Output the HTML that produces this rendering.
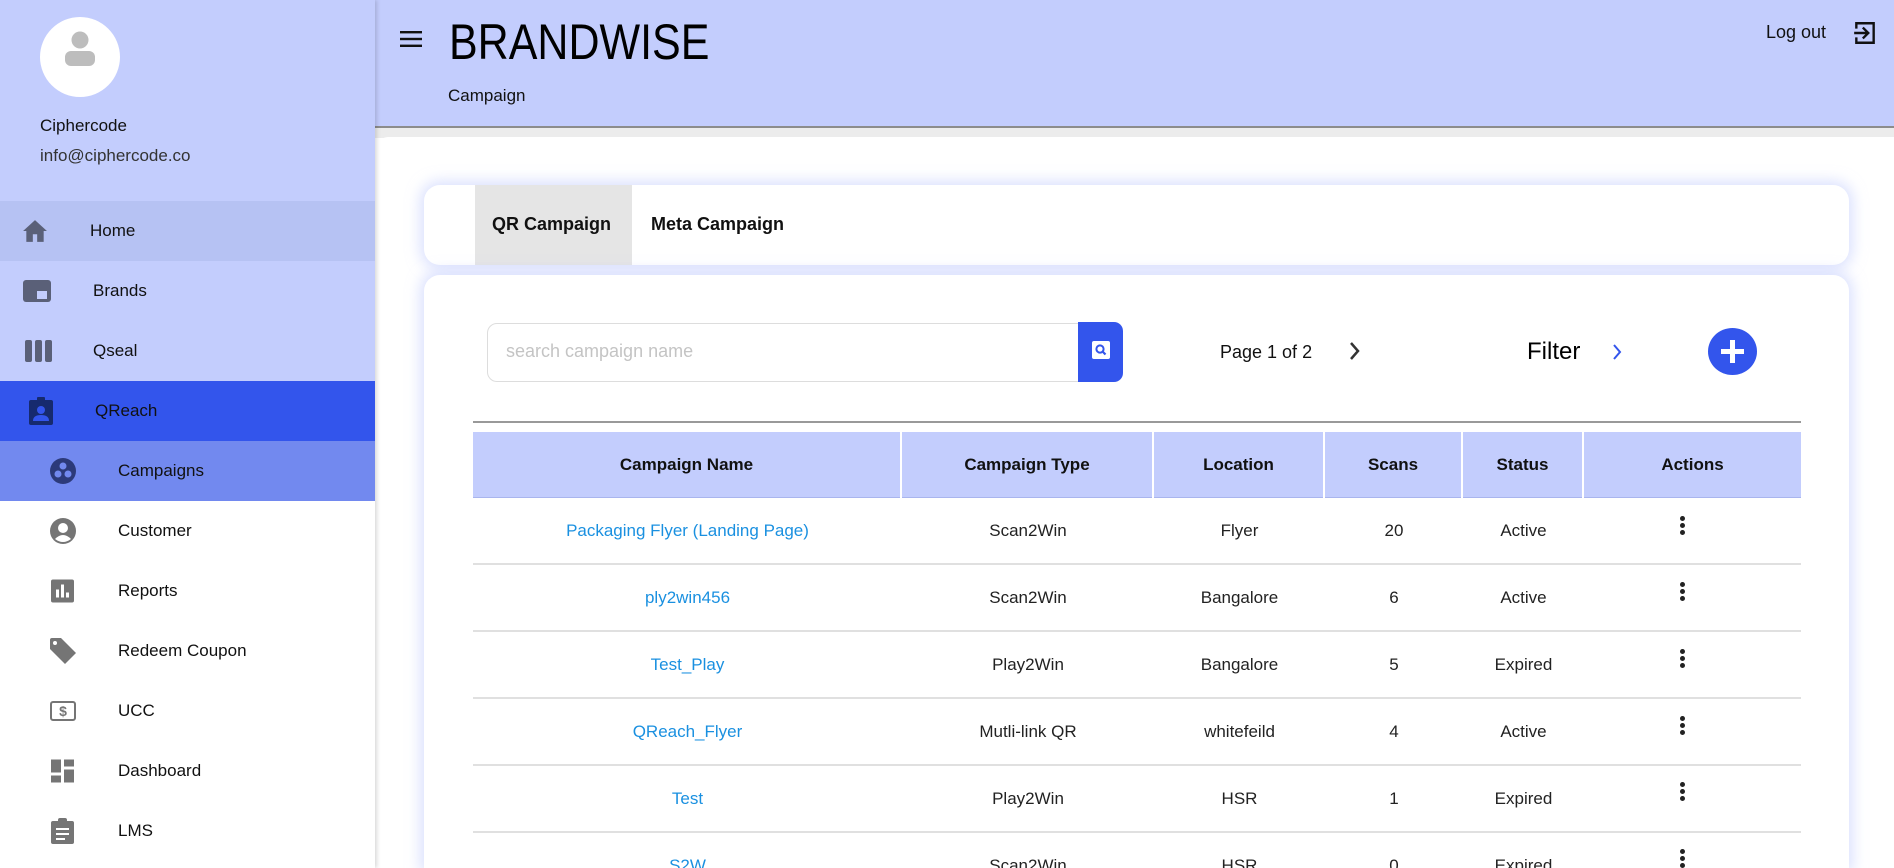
<!DOCTYPE html>
<html style="width:1894px;height:868px;overflow:hidden"><head><meta charset="utf-8"><style>
*{box-sizing:border-box;margin:0;padding:0}
body{width:1894px;height:868px;overflow:hidden;background:#fff;font-family:"Liberation Sans",sans-serif;position:relative;color:#111}
.abs{position:absolute}
#side{left:0;top:0;width:375px;height:868px;background:#fff;box-shadow:2px 0 4px rgba(0,0,0,.15);z-index:2}
#sidetop{left:0;top:0;width:375px;height:501px;background:#c3cdfd}
.nav{position:absolute;left:0;width:375px;height:60px;font-size:17px;color:#111}
.nav span{position:absolute;top:50%;transform:translateY(-50%)}
.nav svg{position:absolute;top:50%;transform:translateY(-50%)}
#hdr{left:375px;top:0;width:1519px;height:128px;background:#c3cdfd;border-bottom:2px solid #8c8c8c}
#strip{left:375px;top:128px;width:1519px;height:10px;background:#ececec}
#main{left:378px;top:137px;width:1516px;height:731px;background:#fff;border-top-left-radius:10px}
.card{background:#fff;border-radius:16px;box-shadow:0 0 14px 4px rgba(195,205,253,.6)}
.th{position:absolute;top:0;height:66px;line-height:66px;text-align:center;font-weight:bold;font-size:17px;border-right:2px solid #fff}
.row{position:absolute;left:473px;width:1328px;height:67px;border-bottom:2px solid #e0e0e0;overflow:hidden}
.c{position:absolute;top:0;height:65px;line-height:65px;text-align:center;font-size:17px;color:#222}
.lnk{color:#1a90e0}
.dots{position:absolute;left:1680px;width:6px}
.dots i{display:block;width:5px;height:5px;border-radius:50%;background:#222;margin-bottom:2px}
#clip{position:absolute;left:0;top:0;width:1894px;height:868px;overflow:hidden}
</style></head><body><div id="clip">
<div id="side" class="abs">
 <div id="sidetop" class="abs"></div>
 <div class="abs" style="left:40px;top:17px;width:80px;height:80px;border-radius:50%;background:#fff"></div>
 <svg class="abs" style="left:62px;top:30px" width="36" height="40" viewBox="0 0 36 40"><circle cx="18" cy="10" r="8.5" fill="#bdbdbd"/><rect x="3" y="21" width="30" height="15" rx="6" fill="#bdbdbd"/></svg>
 <div class="abs" style="left:40px;top:116px;font-size:17px;color:#111">Ciphercode</div>
 <div class="abs" style="left:40px;top:146px;font-size:17px;color:#333">info@ciphercode.co</div>
 <div class="nav" style="top:201px;background:#b6c2f3"><svg style="left:22px" width="26" height="24" viewBox="0 0 24 22"><path d="M12 1L1 11h3v10h6v-7h4v7h6V11h3z" fill="#5a6078"/></svg><span style="left:90px">Home</span></div>
 <div class="nav" style="top:261px"><svg style="left:23px" width="28" height="22" viewBox="0 0 28 22"><rect width="28" height="22" rx="3" fill="#5a6078"/><rect x="14" y="11" width="10" height="8" fill="#c3cdfd"/></svg><span style="left:93px">Brands</span></div>
 <div class="nav" style="top:321px"><svg style="left:25px" width="27" height="22" viewBox="0 0 27 22"><rect x="0" width="7" height="22" rx="2" fill="#5a6078"/><rect x="10" width="7" height="22" rx="2" fill="#5a6078"/><rect x="20" width="7" height="22" rx="2" fill="#5a6078"/></svg><span style="left:93px">Qseal</span></div>
 <div class="nav" style="top:381px;background:#3355ec"><svg style="left:29px" width="24" height="28" viewBox="0 0 24 28"><rect y="3" width="24" height="25" rx="2" fill="#162a6e"/><rect x="8" y="0" width="8" height="6" rx="1" fill="#162a6e"/><circle cx="12" cy="13" r="4" fill="#3355ec"/><path d="M4 24q0-6 8-6t8 6z" fill="#3355ec"/></svg><span style="left:95px">QReach</span></div>
 <div class="nav" style="top:441px;background:#7289ef"><svg style="left:50px" width="26" height="26" viewBox="0 0 26 26"><circle cx="13" cy="13" r="13" fill="#2c3a7a"/><circle cx="13" cy="8" r="3.5" fill="#7289ef"/><circle cx="8" cy="16" r="3.5" fill="#7289ef"/><circle cx="18" cy="16" r="3.5" fill="#7289ef"/></svg><span style="left:118px">Campaigns</span></div>
 <div class="nav" style="top:501px"><svg style="left:50px" width="26" height="26" viewBox="0 0 26 26"><circle cx="13" cy="13" r="13" fill="#757575"/><circle cx="13" cy="10" r="5" fill="#fff"/><path d="M5 21q8-8 16 0q-8 6-16 0z" fill="#fff"/></svg><span style="left:118px">Customer</span></div>
 <div class="nav" style="top:561px"><svg style="left:51px" width="23" height="23" viewBox="0 0 23 23"><rect width="23" height="23" rx="2" fill="#757575"/><rect x="5" y="10" width="3" height="8" fill="#fff"/><rect x="10" y="5" width="3" height="13" fill="#fff"/><rect x="15" y="13" width="3" height="5" fill="#fff"/></svg><span style="left:118px">Reports</span></div>
 <div class="nav" style="top:621px"><svg style="left:50px" width="26" height="26" viewBox="0 0 26 26"><path d="M0 2Q0 0 2 0H11L26 15L15 26L0 11Z" fill="#757575"/><circle cx="5" cy="5" r="2" fill="#fff"/></svg><span style="left:118px">Redeem Coupon</span></div>
 <div class="nav" style="top:681px"><svg style="left:50px" width="26" height="20" viewBox="0 0 26 20"><rect x="1" y="1" width="24" height="18" rx="2" fill="none" stroke="#757575" stroke-width="2"/><text x="13" y="15" text-anchor="middle" font-size="14" font-weight="bold" fill="#757575" font-family="Liberation Sans">$</text></svg><span style="left:118px">UCC</span></div>
 <div class="nav" style="top:741px"><svg style="left:51px" width="23" height="23" viewBox="0 0 23 23"><rect width="10" height="13" fill="#757575"/><rect x="13" width="10" height="7" fill="#757575"/><rect y="16" width="10" height="7" fill="#757575"/><rect x="13" y="10" width="10" height="13" fill="#757575"/></svg><span style="left:118px">Dashboard</span></div>
 <div class="nav" style="top:801px"><svg style="left:51px" width="23" height="26" viewBox="0 0 23 26"><rect y="3" width="23" height="23" rx="2" fill="#757575"/><rect x="7" y="0" width="9" height="6" rx="2" fill="#757575"/><rect x="5" y="10" width="13" height="2" fill="#fff"/><rect x="5" y="15" width="13" height="2" fill="#fff"/><rect x="5" y="20" width="9" height="2" fill="#fff"/></svg><span style="left:118px">LMS</span></div>
</div>
<div id="hdr" class="abs"></div>
<div id="strip" class="abs"></div>
<div id="main" class="abs"></div>
<svg class="abs" style="left:400px;top:31px" width="22" height="16" viewBox="0 0 22 16"><rect y="0" width="22" height="2.4" fill="#111"/><rect y="6.8" width="22" height="2.4" fill="#111"/><rect y="13.6" width="22" height="2.4" fill="#111"/></svg>
<div class="abs" style="left:449px;top:14px;font-size:50px;line-height:56px;transform:scaleX(.86);transform-origin:left;color:#000">BRANDWISE</div>
<div class="abs" style="left:448px;top:86px;font-size:17px;color:#111">Campaign</div>
<div class="abs" style="left:1766px;top:22px;font-size:18px;color:#111">Log out</div>
<svg class="abs" style="left:1852px;top:20px" width="26" height="26" viewBox="0 0 24 24"><path d="M4 8V3h16v18H4v-5" fill="none" stroke="#111" stroke-width="2.2"/><path d="M2 12h12M10 7l5 5-5 5" fill="none" stroke="#111" stroke-width="2.2"/></svg>

<div class="abs card" style="left:424px;top:185px;width:1425px;height:80px"></div>
<div class="abs" style="left:475px;top:185px;width:157px;height:80px;background:#e5e5e5"></div>
<div class="abs" style="left:492px;top:214px;font-size:18px;font-weight:bold">QR Campaign</div>
<div class="abs" style="left:651px;top:214px;font-size:18px;font-weight:bold">Meta Campaign</div>

<div class="abs card" style="left:424px;top:275px;width:1425px;height:593px;border-bottom-left-radius:0;border-bottom-right-radius:0"></div>
<div class="abs" style="left:487px;top:323px;width:600px;height:59px;border:1px solid #ddd;border-radius:10px;background:#fff"></div>
<div class="abs" style="left:506px;top:341px;font-size:18px;color:#c4c4c4">search campaign name</div>
<div class="abs" style="left:1078px;top:322px;width:45px;height:60px;background:#3355ec;border-radius:0 9px 9px 0"></div>
<svg class="abs" style="left:1092px;top:341px" width="18" height="18" viewBox="0 0 18 18"><rect width="18" height="18" rx="2" fill="#fff"/><circle cx="8" cy="8" r="3.6" fill="none" stroke="#3355ec" stroke-width="2"/><path d="M10.5 10.5l3 3" stroke="#3355ec" stroke-width="2.2"/></svg>
<div class="abs" style="left:1220px;top:342px;font-size:18px;color:#111">Page 1 of 2</div>
<svg class="abs" style="left:1349px;top:341px" width="12" height="20" viewBox="0 0 12 20"><path d="M2 2l7 8-7 8" fill="none" stroke="#333" stroke-width="2.5"/></svg>
<div class="abs" style="left:1527px;top:338px;font-size:24px;color:#000">Filter</div>
<svg class="abs" style="left:1612px;top:343px" width="10" height="18" viewBox="0 0 10 18"><path d="M2 2l6 7-6 7" fill="none" stroke="#3355ec" stroke-width="2"/></svg>
<svg class="abs" style="left:1708px;top:328px" width="49" height="47" viewBox="0 0 49 47"><ellipse cx="24.5" cy="23.5" rx="24.5" ry="23.5" fill="#3355ec"/><path d="M24.5 12v23M13 23.5h23" stroke="#fff" stroke-width="5"/></svg>

<div class="abs" style="left:473px;top:421px;width:1328px;height:2px;background:#999"></div>
<div class="abs" style="left:473px;top:432px;width:1328px;height:66px;background:#c3cdfd;border-bottom:1px solid #a9b5ee">
 <div class="th" style="left:0;width:429px">Campaign Name</div>
 <div class="th" style="left:429px;width:252px">Campaign Type</div>
 <div class="th" style="left:681px;width:171px">Location</div>
 <div class="th" style="left:852px;width:138px">Scans</div>
 <div class="th" style="left:990px;width:121px">Status</div>
 <div class="th" style="left:1111px;width:217px;border:0">Actions</div>
</div>

<div class="row" style="top:498px"><div class="c lnk" style="left:0;width:429px">Packaging Flyer (Landing Page)</div><div class="c" style="left:429px;width:252px">Scan2Win</div><div class="c" style="left:681px;width:171px">Flyer</div><div class="c" style="left:852px;width:138px">20</div><div class="c" style="left:990px;width:121px">Active</div></div>
<div class="row" style="top:565px"><div class="c lnk" style="left:0;width:429px">ply2win456</div><div class="c" style="left:429px;width:252px">Scan2Win</div><div class="c" style="left:681px;width:171px">Bangalore</div><div class="c" style="left:852px;width:138px">6</div><div class="c" style="left:990px;width:121px">Active</div></div>
<div class="row" style="top:632px"><div class="c lnk" style="left:0;width:429px">Test_Play</div><div class="c" style="left:429px;width:252px">Play2Win</div><div class="c" style="left:681px;width:171px">Bangalore</div><div class="c" style="left:852px;width:138px">5</div><div class="c" style="left:990px;width:121px">Expired</div></div>
<div class="row" style="top:699px"><div class="c lnk" style="left:0;width:429px">QReach_Flyer</div><div class="c" style="left:429px;width:252px">Mutli-link QR</div><div class="c" style="left:681px;width:171px">whitefeild</div><div class="c" style="left:852px;width:138px">4</div><div class="c" style="left:990px;width:121px">Active</div></div>
<div class="row" style="top:766px"><div class="c lnk" style="left:0;width:429px">Test</div><div class="c" style="left:429px;width:252px">Play2Win</div><div class="c" style="left:681px;width:171px">HSR</div><div class="c" style="left:852px;width:138px">1</div><div class="c" style="left:990px;width:121px">Expired</div></div>
<div class="row" style="top:833px;height:35px;border:0"><div class="c lnk" style="left:0;width:429px">S2W</div><div class="c" style="left:429px;width:252px">Scan2Win</div><div class="c" style="left:681px;width:171px">HSR</div><div class="c" style="left:852px;width:138px">0</div><div class="c" style="left:990px;width:121px">Expired</div></div>

<div class="dots" style="top:516px"><i></i><i></i><i></i></div>
<div class="dots" style="top:582px"><i></i><i></i><i></i></div>
<div class="dots" style="top:649px"><i></i><i></i><i></i></div>
<div class="dots" style="top:716px"><i></i><i></i><i></i></div>
<div class="dots" style="top:782px"><i></i><i></i><i></i></div>
<div class="dots" style="top:849px"><i></i><i></i><i></i></div>
</div></body></html>
